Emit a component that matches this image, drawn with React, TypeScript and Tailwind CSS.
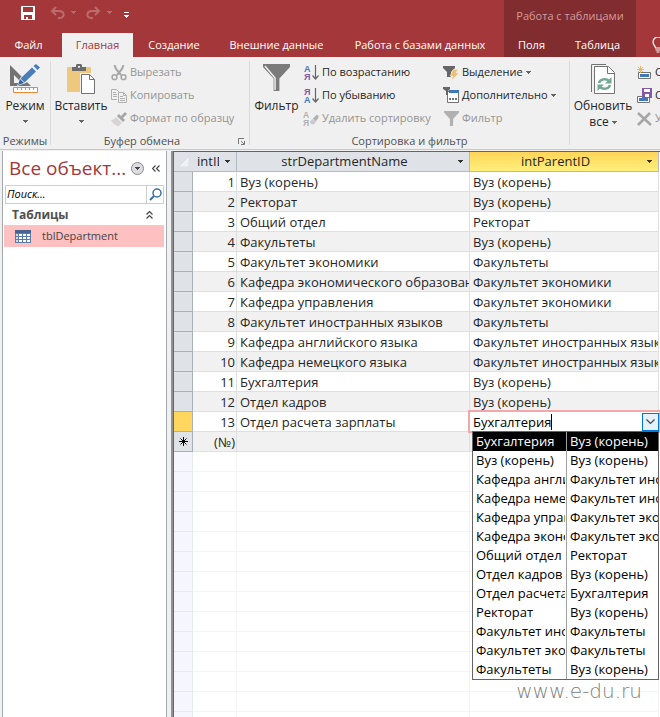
import type { ReactNode } from "react"

const departments = [
  { id: 1, name: "Вуз (корень)", parent: "Вуз (корень)" },
  { id: 2, name: "Ректорат", parent: "Вуз (корень)" },
  { id: 3, name: "Общий отдел", parent: "Ректорат" },
  { id: 4, name: "Факультеты", parent: "Вуз (корень)" },
  { id: 5, name: "Факультет экономики", parent: "Факультеты" },
  { id: 6, name: "Кафедра экономического образования", parent: "Факультет экономики" },
  { id: 7, name: "Кафедра управления", parent: "Факультет экономики" },
  { id: 8, name: "Факультет иностранных языков", parent: "Факультеты" },
  { id: 9, name: "Кафедра английского языка", parent: "Факультет иностранных языков" },
  { id: 10, name: "Кафедра немецкого языка", parent: "Факультет иностранных языков" },
  { id: 11, name: "Бухгалтерия", parent: "Вуз (корень)" },
  { id: 12, name: "Отдел кадров", parent: "Вуз (корень)" },
  { id: 13, name: "Отдел расчета зарплаты", parent: "Бухгалтерия" },
]

const options = [
  ["Бухгалтерия", "Вуз (корень)"],
  ["Вуз (корень)", "Вуз (корень)"],
  ["Кафедра английского языка", "Факультет иностранных языков"],
  ["Кафедра немецкого языка", "Факультет иностранных языков"],
  ["Кафедра управления", "Факультет экономики"],
  ["Кафедра экономического образования", "Факультет экономики"],
  ["Общий отдел", "Ректорат"],
  ["Отдел кадров", "Вуз (корень)"],
  ["Отдел расчета зарплаты", "Бухгалтерия"],
  ["Ректорат", "Вуз (корень)"],
  ["Факультет иностранных языков", "Факультеты"],
  ["Факультет экономики", "Факультеты"],
  ["Факультеты", "Вуз (корень)"],
]

/* ================= ICONS ================= */

function Arrow({ className = "fill-[#666666]" }: { className?: string }) {
  return (
    <svg width="5" height="3" viewBox="0 0 5 3" className={`shrink-0 ${className}`} shapeRendering="crispEdges" aria-hidden="true">
      <path d="M0 0h5v1h-1v1h-1v1h-1v-1h-1v-1h-1z" />
    </svg>
  )
}

function SaveIcon() {
  return (
    <svg width="14" height="14" viewBox="0 0 14 14" shapeRendering="crispEdges" aria-hidden="true">
      <path d="M0 0h14v14H0z" fill="#fff" />
      <path d="M2 1h10v5H2zM3 9h8v4h-4v-2H5v2H3z" fill="#a4373a" />
    </svg>
  )
}

function UndoIcon({ className = "" }: { className?: string }) {
  return (
    <svg width="15" height="13" viewBox="0 0 15 13" className={className} fill="none" stroke="#bb6b6d" strokeWidth="2" aria-hidden="true">
      <path d="M6 1 2 5l4 4M2 5h7c6 0 6 7 1 7H8" />
    </svg>
  )
}

function ViewIcon() {
  return (
    <svg width="30" height="30" viewBox="0 0 30 30" aria-hidden="true">
      <path fillRule="evenodd" d="M0 1v21h21zM4 11l8 8H4z" fill="#737373" />
      <path d="m7 22 3-8L23 2l5 4-12 13z" fill="#f0f0f0" />
      <path d="m8 21 2-6 4 4z" fill="#2c66a5" />
      <path d="M10.500 14.500 22 3.500l4 4L14.500 18.500zM23.500 2 26 0l4 3.500L27.500 6z" fill="#4a7ebb" />
      <path d="M3.500 23.500h24v5h-24z" fill="#fff" stroke="#ed8733" />
      <path d="M7.500 24v2M11.500 24v2M15.500 24v2M19.500 24v2M23.500 24v2" stroke="#ed8733" />
    </svg>
  )
}

function PasteIcon() {
  return (
    <svg width="29" height="30" viewBox="0 0 29 30" aria-hidden="true">
      <path d="M0 4a1 1 0 0 1 1-1h22a1 1 0 0 1 1 1v23a1 1 0 0 1-1 1H1a1 1 0 0 1-1-1z" fill="#eec87e" />
      <path fillRule="evenodd" d="M5 3h4V1.500C9 .6 9.600 0 10.500 0h3c.9 0 1.500.6 1.500 1.500V3h4v4H5zm6-1v2h2V2z" fill="#6b6b6b" />
      <path d="M13 9h12l4 5v16H13z" fill="#f0f0f0" />
      <path d="M14.500 10.500h8l5 5v14h-13z" fill="#fff" stroke="#737373" />
      <path d="M22.500 10.500v5h5" fill="none" stroke="#737373" />
    </svg>
  )
}

function CutIcon() {
  return (
    <svg width="16" height="16" viewBox="0 0 16 16" fill="none" stroke="#a6a6a6" strokeWidth="1.500" aria-hidden="true">
      <path d="M3.500 0 5 4l5 6M12.500 0 11 4l-5 6" strokeWidth="2" />
      <circle cx="3.500" cy="12.200" r="2.400" />
      <circle cx="12.500" cy="12.200" r="2.400" />
    </svg>
  )
}

function CopyIcon() {
  return (
    <svg width="16" height="16" viewBox="0 0 16 16" fill="none" stroke="#b1b1b1" aria-hidden="true">
      <path d="M6 11.500H.5V1.500h5l3 3M2 4.500h3M2 6.500h4M2 8.500h4" />
      <path d="M7.500 4.500h5l3 3v7h-8zM12.500 4.500v3h3M9 8.500h3M9 10.500h5M9 12.500h5" />
    </svg>
  )
}

function BrushIcon() {
  return (
    <svg width="16" height="16" viewBox="0 0 16 16" aria-hidden="true">
      <path d="M0 9c2 0 4-1 5-3l6 6-4 3.500C4 14 1 12 0 9z" fill="#d8d3d6" />
      <path d="m6 5 2-2 6 6-2 2zM10 5l4-4 2 2-4 4z" fill="#a6a6a6" />
    </svg>
  )
}

function FunnelIcon({ size, color, shine = false }: { size: number; color: string; shine?: boolean }) {
  return (
    <svg width={size} height={size} viewBox="0 0 28 28" aria-hidden="true">
      <path d="M0 0h28v3L17 15v13h-6V15L0 3z" fill={color} />
      {shine && <path d="m2 2 10.500 12.500V27" fill="none" stroke="#f0f0f0" strokeWidth="1.500" />}
    </svg>
  )
}

/* Letters are live text, only the arrow is a path */
function SortIcon({ top, bottom }: { top: string; bottom: string }) {
  return (
    <svg width="15" height="18" viewBox="0 0 15 18" aria-hidden="true">
      <text x="0" y="8" fontSize="9" fontWeight="700" fontFamily="Liberation Sans, sans-serif" fill={top === "А" ? "#3f7ab8" : "#8757a8"}>{top}</text>
      <text x="0" y="16" fontSize="9" fontWeight="700" fontFamily="Liberation Sans, sans-serif" fill={bottom === "А" ? "#3f7ab8" : "#8757a8"}>{bottom}</text>
      <path d="M11.500 1v14M8.500 11.500l3 3.500 3-3.500" fill="none" stroke="#666" strokeWidth="1.200" />
    </svg>
  )
}

function ClearSortIcon() {
  return (
    <svg width="17" height="18" viewBox="0 0 17 18" aria-hidden="true">
      <text x="0" y="8" fontSize="9" fontWeight="700" fontFamily="Liberation Sans, sans-serif" fill="#b1b1b1">А</text>
      <text x="0" y="16" fontSize="9" fontWeight="700" fontFamily="Liberation Sans, sans-serif" fill="#b1b1b1">Я</text>
      <path d="m8 11 2-2 3.500 3.500-2 2H9l-1.500-1.500z" fill="#c9c9c9" />
      <path d="m10.500 8.500 4-4 2 1v2l-3 4.500z" fill="#b1b1b1" />
    </svg>
  )
}

function SelectionIcon() {
  return (
    <svg width="16" height="16" viewBox="0 0 16 16" aria-hidden="true">
      <path d="M0 1h12v2L8 7v5H4V7L0 3z" fill="#666" />
      <path d="m10 5 5-1-2 4h3l-8 8 2-5H7z" fill="#f0bf6b" stroke="#f0f0f0" strokeWidth=".5" />
    </svg>
  )
}

function AdvancedIcon() {
  return (
    <svg width="16" height="17" viewBox="0 0 16 17" aria-hidden="true">
      <path d="M4.500 4.500h11v11h-11z" fill="#fff" stroke="#737373" />
      <path d="M6 3h10v3H6z" fill="#3f7ab8" />
      <path d="M0 0h7v2L5 4v4H3V4L0 2z" fill="#666" />
      <path d="M6 11h2v2H6zM9 11h2v2H9zM12 11h2v2h-2z" fill="#737373" />
    </svg>
  )
}

function RefreshIcon() {
  return (
    <svg width="24" height="30" viewBox="0 0 24 30" fill="none" aria-hidden="true">
      <path d="M.5 28V.5H15" stroke="#737373" />
      <path d="M3.500 2.500h14l6 6v21h-20z" fill="#fff" stroke="#737373" />
      <path d="M16.500 2.500v7h7" stroke="#737373" />
      <path d="M8 19c1-4 7-5 10-2M19 21c-1 4-7 5-10 2" stroke="#74a893" strokeWidth="2.500" />
      <path d="M20.500 13v6.500H14zM6.500 27v-6.500H13z" fill="#74a893" />
    </svg>
  )
}

function NewRecordIcon() {
  return (
    <svg width="14" height="13" viewBox="0 0 14 13" fill="none" aria-hidden="true">
      <path d="M1.500 6.500h12v6h-12z" fill="#fff" stroke="#737373" />
      <path d="M3 8h9v3H3z" fill="#3f7ab8" />
      <path d="M3.500 0v7M0 3.500h7M1 1l5 5M6 1 1 6" stroke="#edba62" />
    </svg>
  )
}

function SaveRecordIcon() {
  return (
    <svg width="15" height="15" viewBox="0 0 15 15" fill="none" aria-hidden="true">
      <path d="M.5 8.500h12v6H.5z" fill="#fff" stroke="#737373" />
      <path d="M2 10h9v3H2z" fill="#3f7ab8" />
      <path d="M5 0h10v10H5z" fill="#8757a8" />
      <path d="M7 1h6v3H7zM8 6h4v3H8z" fill="#fff" />
    </svg>
  )
}

function CloseIcon() {
  return (
    <svg width="15" height="14" viewBox="0 0 15 14" fill="none" stroke="#a6a6a6" strokeWidth="2.500" aria-hidden="true">
      <path d="m1 1 13 12M13 1 1 13" />
    </svg>
  )
}

function TableIcon() {
  return (
    <svg width="16" height="13" viewBox="0 0 16 13" shapeRendering="crispEdges" aria-hidden="true">
      <path d="M0 0h16v13H0z" fill="#5d7ba8" />
      <path d="M0 0h16v3H0z" fill="#47638f" />
      <path d="M1 4h2v2H1zM1 7h2v2H1zM1 10h2v2H1z" fill="#cfdcee" />
      <path d="M4 4h3v2H4zM8 4h3v2H8zM12 4h3v2h-3zM4 7h3v2H4zM8 7h3v2H8zM12 7h3v2h-3zM4 10h3v2H4zM8 10h3v2H8zM12 10h3v2h-3z" fill="#fff" />
    </svg>
  )
}

/* ================= RIBBON ================= */

function SmallButton({ icon, children, disabled = false, menu = false }: { icon: ReactNode; children: ReactNode; disabled?: boolean; menu?: boolean }) {
  return (
    <button disabled={disabled} className={`flex h-[23px] items-center gap-[3px] whitespace-nowrap ${disabled ? "text-[#949494]" : "text-[#262626]"}`}>
      <span className="flex w-4 shrink-0 justify-center">{icon}</span>
      <span>{children}</span>
      {menu && <Arrow />}
    </button>
  )
}

function BigButton({ icon, label, children }: { icon: ReactNode; label: string; children?: ReactNode }) {
  return (
    <button className="flex flex-col items-center whitespace-nowrap pt-[3px] text-[12px] leading-4">
      <span className="flex h-[34px] items-start">{icon}</span>
      <span>{label}</span>
      {children}
    </button>
  )
}

function Group({ label, className = "", launcher = false, children }: { label: string; className?: string; launcher?: boolean; children: ReactNode }) {
  return (
    <section className={`relative flex shrink-0 flex-col ${className}`}>
      <div className="flex h-[72px]">{children}</div>
      <div className={`text-center leading-4 text-[#505050] ${launcher ? "pr-4" : ""}`}>{label}</div>
      {launcher && (
        <button aria-label="Параметры буфера обмена" className="absolute bottom-1 right-1">
          <svg width="7" height="7" viewBox="0 0 7 7" fill="none" stroke="#777" aria-hidden="true">
            <path d="M.5 6V.5H6M3 3l3 3M6.500 3v3.500H3" />
          </svg>
        </button>
      )}
    </section>
  )
}

function Divider() {
  return <div className="my-1 w-px shrink-0 bg-[#dadada]" />
}

function Header() {
  return (
    <header className="flex shrink-0 overflow-hidden bg-[#a4373a] text-white">
      <div className="flex w-[504px] shrink-0 flex-col">
        <div className="flex h-[33px] items-start pl-[21px] pt-1.5">
          <button aria-label="Сохранить"><SaveIcon /></button>
          <button aria-label="Отменить" className="ml-[15px] flex items-center gap-[6px]">
            <UndoIcon />
            <Arrow className="fill-[#bb6b6d]" />
          </button>
          <button aria-label="Повторить" className="ml-[10px] flex items-center gap-[6px]">
            <UndoIcon className="-scale-x-100" />
            <Arrow className="fill-[#bb6b6d]" />
          </button>
          <button aria-label="Настройка панели" className="ml-3 mt-1.5 flex flex-col items-center gap-[2px]">
            <span className="h-px w-[5px] bg-white" />
            <Arrow className="fill-white" />
          </button>
        </div>
        <nav className="flex h-6">
          <button className="mr-[5px] w-[57px]">Файл</button>
          <button className="w-[71px] bg-[#f0f0f0] text-[#a4373a]">Главная</button>
          <button className="w-[82px]">Создание</button>
          <button className="w-[123px] whitespace-nowrap">Внешние данные</button>
          <button className="w-[164px] whitespace-nowrap">Работа с базами данных</button>
        </nav>
      </div>
      <div className="w-[132px] shrink-0 bg-[#812c2f]">
        <div className="flex h-[33px] items-center justify-center whitespace-nowrap text-[#d29b9d]">Работа с таблицами</div>
        <nav className="flex h-6">
          <button className="w-[55px]">Поля</button>
          <button className="w-[77px]">Таблица</button>
        </nav>
      </div>
      <button aria-label="Помощник" className="ml-4 self-end pb-1">
        <svg width="12" height="16" viewBox="0 0 12 16" fill="none" stroke="#fff" strokeWidth="1.200" aria-hidden="true">
          <path d="M3.500 11c0-2-2.500-3-2.500-6a5 5 0 0 1 10 0c0 3-2.500 4-2.500 6zM3.500 13h5M4.500 15h3" />
        </svg>
      </button>
    </header>
  )
}

function Ribbon() {
  return (
    <div className="flex h-[93px] shrink-0 overflow-hidden border-b border-[#c8c8c8] bg-[#f0f0f0] text-[#262626]">
      <Group label="Режимы" className="w-[50px] pt-1">
        <div className="flex flex-1 justify-center">
          <BigButton icon={<ViewIcon />} label="Режим"><span className="pt-1.5"><Arrow /></span></BigButton>
        </div>
      </Group>
      <Divider />
      <Group label="Буфер обмена" className="w-[198px] pt-1" launcher>
        <div className="flex w-[60px] justify-center">
          <BigButton icon={<PasteIcon />} label="Вставить"><span className="pt-1.5"><Arrow /></span></BigButton>
        </div>
        <div>
          <SmallButton icon={<CutIcon />} disabled>Вырезать</SmallButton>
          <SmallButton icon={<CopyIcon />} disabled>Копировать</SmallButton>
          <SmallButton icon={<BrushIcon />} disabled>Формат по образцу</SmallButton>
        </div>
      </Group>
      <Divider />
      <Group label="Сортировка и фильтр" className="w-[319px] pt-1">
        <div className="flex w-[53px] justify-center">
          <BigButton icon={<FunnelIcon size={27} color="#7b7b7b" shine />} label="Фильтр" />
        </div>
        <div className="w-[140px]">
          <SmallButton icon={<SortIcon top="А" bottom="Я" />}>По возрастанию</SmallButton>
          <SmallButton icon={<SortIcon top="Я" bottom="А" />}>По убыванию</SmallButton>
          <SmallButton icon={<ClearSortIcon />} disabled>Удалить сортировку</SmallButton>
        </div>
        <div>
          <SmallButton icon={<SelectionIcon />} menu>Выделение</SmallButton>
          <SmallButton icon={<AdvancedIcon />} menu>Дополнительно</SmallButton>
          <SmallButton icon={<FunnelIcon size={15} color="#b1b1b1" />} disabled>Фильтр</SmallButton>
        </div>
      </Group>
      <Divider />
      <Group label="" className="w-[220px] pt-1">
        <div className="flex w-[66px] justify-center">
          <BigButton icon={<RefreshIcon />} label="Обновить">
            <span className="flex items-center gap-[3px]">все <Arrow /></span>
          </BigButton>
        </div>
        <div>
          <SmallButton icon={<NewRecordIcon />}>Создать</SmallButton>
          <SmallButton icon={<SaveRecordIcon />}>Сохранить</SmallButton>
          <SmallButton icon={<CloseIcon />} disabled>Удалить</SmallButton>
        </div>
      </Group>
    </div>
  )
}

/* ================= NAVIGATION PANE ================= */

function NavigationPane() {
  return (
    <aside className="ml-[2px] mr-1 w-[165px] shrink-0 border-x border-[#a3a9b1] bg-white px-[2px]">
      <div className="flex h-[34px] items-center pl-1 pr-1">
        <h1 className="flex-1 whitespace-nowrap text-[19px] text-[#a4373a]">Все объект...</h1>
        <button aria-label="Выбор категории" className="mr-2 flex size-[13px] items-center justify-center rounded-full border border-[#8a8a8a] bg-[#dcdce2]">
          <Arrow className="fill-[#444444]" />
        </button>
        <button aria-label="Свернуть область">
          <svg width="8" height="7" viewBox="0 0 8 7" fill="none" stroke="#444" strokeWidth="1.200" aria-hidden="true">
            <path d="M3.500.5l-3 3 3 3M7.500.5l-3 3 3 3" />
          </svg>
        </button>
      </div>
      <div className="flex h-[19px] border border-[#cfcfcf]">
        <input aria-label="Поиск" placeholder="Поиск..." className="w-0 flex-1 px-px italic outline-none placeholder:text-black" />
        <button aria-label="Найти" className="flex w-[17px] items-center justify-center border-l border-[#cfcfcf]">
          <svg width="13" height="13" viewBox="0 0 13 13" fill="none" stroke="#3a6ea5" aria-hidden="true">
            <circle cx="8" cy="5" r="4" strokeWidth="1.500" />
            <path d="m5 8-4 4" strokeWidth="2" />
          </svg>
        </button>
      </div>
      <button className="flex h-[21px] w-full items-center justify-between pl-[7px] pr-[11px] text-[12px] font-bold text-[#505050]">
        Таблицы
        <svg width="7" height="8" viewBox="0 0 7 8" fill="none" stroke="#444" strokeWidth="1.200" aria-hidden="true">
          <path d="M.5 3.500l3-3 3 3M.5 7.500l3-3 3 3" />
        </svg>
      </button>
      <a href="#tblDepartment" className="-ml-px flex h-[22px] items-center gap-[11px] bg-[#ffc0c2] pl-[11px] text-[#444444]">
        <TableIcon />
        tblDepartment
      </a>
    </aside>
  )
}

/* ================= DATASHEET ================= */

function ParentCombo() {
  return (
    <div className="relative">
      <div className="absolute -left-[2px] -right-[3px] -top-[2px] z-10 flex h-[23px] items-center border-2 border-[#f4a7a9] bg-white pl-[3px] text-black">
        <input
          role="combobox"
          aria-label="intParentID"
          aria-expanded="true"
          aria-controls="parent-list"
          defaultValue="Бухгалтерия"
          className="h-4 border-r border-black outline-none [field-sizing:content]"
        />
        <button aria-label="Открыть список" className="ml-auto flex h-[18px] w-[17px] items-center justify-center border border-[#0078d7] bg-[#e5f1fb]">
          <svg width="9" height="6" viewBox="0 0 9 6" fill="none" stroke="#444" strokeWidth="1.200" aria-hidden="true">
            <path d="M.5.5l4 4 4-4" />
          </svg>
        </button>
      </div>
      <ul id="parent-list" role="listbox" aria-label="intParentID" className="absolute -right-px left-[2px] top-[19px] z-20 border border-[#646464] bg-white leading-[19px] text-black">
        {options.map(([name, parent], i) => (
          <li
            key={name}
            role="option"
            aria-selected={i === 0}
            className={`flex h-[19px] ${i === 0 ? "bg-black text-white" : ""}`}
          >
            <span className="w-[94px] shrink-0 border-r border-[#a0a0a0] pl-[3px] pr-px">
              <span className="block overflow-hidden">{name}</span>
            </span>
            <span className="min-w-0 flex-1 overflow-hidden pl-[3px]">{parent}</span>
          </li>
        ))}
      </ul>
    </div>
  )
}

function HeaderCell({ children, active = false }: { children: ReactNode; active?: boolean }) {
  return (
    <th
      className={`overflow-hidden border-b border-r border-[#b4bac2] p-0 font-normal ${active ? "bg-linear-to-b from-[#ffd558] to-[#fff07c]" : "bg-[#dfe3e8]"}`}
    >
      <div className="flex items-center gap-1.5 pr-1.5">
        <span className="min-w-0 flex-1 overflow-hidden">{children}</span>
        <Arrow className="fill-[#333333]" />
      </div>
    </th>
  )
}

function Datasheet() {
  return (
    <div className="flex min-w-0 flex-1 border-l-2 border-[#929292]">
      <main className="min-w-0 flex-1 overflow-hidden border-l border-t border-[#646464] bg-white pr-px">
        <table className="w-full table-fixed border-separate border-spacing-0 whitespace-nowrap text-[13px] leading-[19px] text-[#262626]">
          <colgroup>
            <col className="w-[19px]" />
            <col className="w-[44px]" />
            <col className="w-[233px]" />
            <col />
          </colgroup>
          <thead>
            <tr className="h-5">
              <th aria-label="Выделить все" className="border-b border-[#b4bac2] bg-[#dfe3e8] p-0">
                <svg width="11" height="11" viewBox="0 0 11 11" className="ml-1" aria-hidden="true">
                  <path d="M11 0v11H0z" fill="#f0f2f5" stroke="#c3cad3" strokeWidth=".5" />
                </svg>
              </th>
              <HeaderCell><span className="pl-1">intID</span></HeaderCell>
              <HeaderCell>strDepartmentName</HeaderCell>
              <HeaderCell active>intParentID</HeaderCell>
            </tr>
          </thead>
          <tbody className="leading-[18px]">
            {departments.map((row) => {
              const current = row.id === 13
              return (
                <tr key={row.id} className="h-5 odd:bg-white even:bg-[#f1f1f1]">
                  <td className={`border-b border-r border-[#a9b0b9] p-0 ${current ? "bg-[#ffd75e]" : "bg-[#dfe3e8]"}`} />
                  <td className="border-b border-r border-[#dfdfdf] p-0 pr-px pt-px text-right">{row.id}</td>
                  <td className="overflow-hidden border-b border-r border-[#dfdfdf] p-0 pl-[3px] pt-px">{row.name}</td>
                  <td className={`border-b border-r border-[#dfdfdf] p-0 ${current ? "align-top" : "overflow-hidden pl-[3px] pt-px"}`}>
                    {current ? <ParentCombo /> : row.parent}
                  </td>
                </tr>
              )
            })}
            <tr className="h-5 bg-[#f1f1f1]">
              <td className="border-b border-r border-[#a9b0b9] bg-[#dfe3e8] p-0">
                <svg width="9" height="9" viewBox="0 0 9 9" className="mx-auto" stroke="#000" aria-hidden="true">
                  <path d="M4.500 0v9M0 4.500h9M1.500 1.500l6 6M7.500 1.500l-6 6" />
                </svg>
              </td>
              <td className="border-b border-r border-[#dfdfdf] p-0 pr-px pt-px text-right">(№)</td>
              <td className="border-b border-r border-[#dfdfdf] p-0" />
              <td className="border-b border-r border-[#dfdfdf] p-0" />
            </tr>
            {Array.from({ length: 14 }, (_, i) => (
              <tr key={i} className="h-5">
                <td className="border-b border-r border-[#e8e9ee] bg-[#f6f6ff] p-0" />
                <td className="border-b border-r border-[#f4f4f4] p-0" />
                <td className="border-b border-r border-[#f4f4f4] p-0" />
                <td className="border-b border-r border-[#f4f4f4] p-0" />
              </tr>
            ))}
          </tbody>
        </table>
      </main>
    </div>
  )
}

export default function App() {
  return (
    <div className="relative flex h-screen flex-col overflow-hidden bg-[#f0f0f0] font-['Open_Sans','Noto_Sans',sans-serif] text-[11px]">
      <Header />
      <Ribbon />
      <div className="flex min-h-0 flex-1 pt-px">
        <NavigationPane />
        <Datasheet />
      </div>
      <div className="absolute bottom-3 right-[18px] font-['DejaVu_Sans',sans-serif] text-[20px] font-extralight leading-7 text-[#808080]">
        www.e-du.ru
      </div>
    </div>
  )
}
